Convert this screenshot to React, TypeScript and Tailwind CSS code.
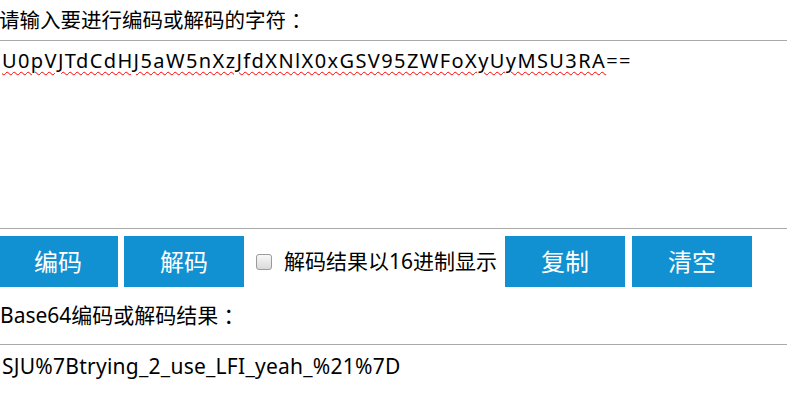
import React from 'react';

const encoded = 'U0pVJTdCdHJ5aW5nXzJfdXNlX0xGSV95ZWFoXyUyMSU3RA';
const decoded = 'SJU%7Btrying_2_use_LFI_yeah_%21%7D';

const Button = ({ label, className = '' }: { label: string; className?: string }) => (
  <button
    type="button"
    className={`h-[51px] w-[120px] bg-[#1191d1] text-white text-[24px] leading-none ${className}`}
  >
    {label}
  </button>
);

// centred full-width colon
const Colon = () => <span className="font-['Noto_Sans_CJK_TC',sans-serif]">：</span>;

const App = () => {
  return (
    <div className="w-screen h-screen overflow-hidden bg-white text-black font-['Noto_Sans','Noto_Sans_CJK_SC',sans-serif]">
      <div className="-ml-[2px] w-[800px]">
        {/* input */}
        <div className="h-[40px] flex items-center pl-[1px] text-[20.5px]">
          请输入要进行编码或解码的字符<Colon />
        </div>
        <div className="-ml-[2px] h-[189px] border-y border-[#a9a9a9] px-[6px] pt-[6px] text-[20px] tracking-[1.4px] leading-[28px]">
          <span className="underline decoration-wavy decoration-[#f00] decoration-1 underline-offset-[3px]">
            {encoded}
          </span>
          ==
        </div>

        {/* actions */}
        <div className="mt-[7px] flex items-center h-[51px]">
          <Button label="编码" />
          <Button label="解码" className="ml-[6px]" />
          <div className="ml-[12px] w-[16px] h-[16px] rounded-[3px] border border-[#9a9a9a] bg-gradient-to-b from-[#f8f8f8] to-[#dadada]" />
          <span className="ml-[12px] text-[21px]">解码结果以16进制显示</span>
          <Button label="复制" className="ml-[8px]" />
          <Button label="清空" className="ml-[7px]" />
        </div>

        {/* output */}
        <div className="h-[57px] flex items-center pl-[2px] text-[21px]">
          Base64编码或解码结果<Colon />
        </div>
        <div className="-ml-[2px] h-[100px] border-t border-[#a9a9a9] px-[6px] pt-[6px] text-[21px] tracking-[0.25px] leading-[30px]">
          {decoded}
        </div>
      </div>
    </div>
  );
};

export default App;
